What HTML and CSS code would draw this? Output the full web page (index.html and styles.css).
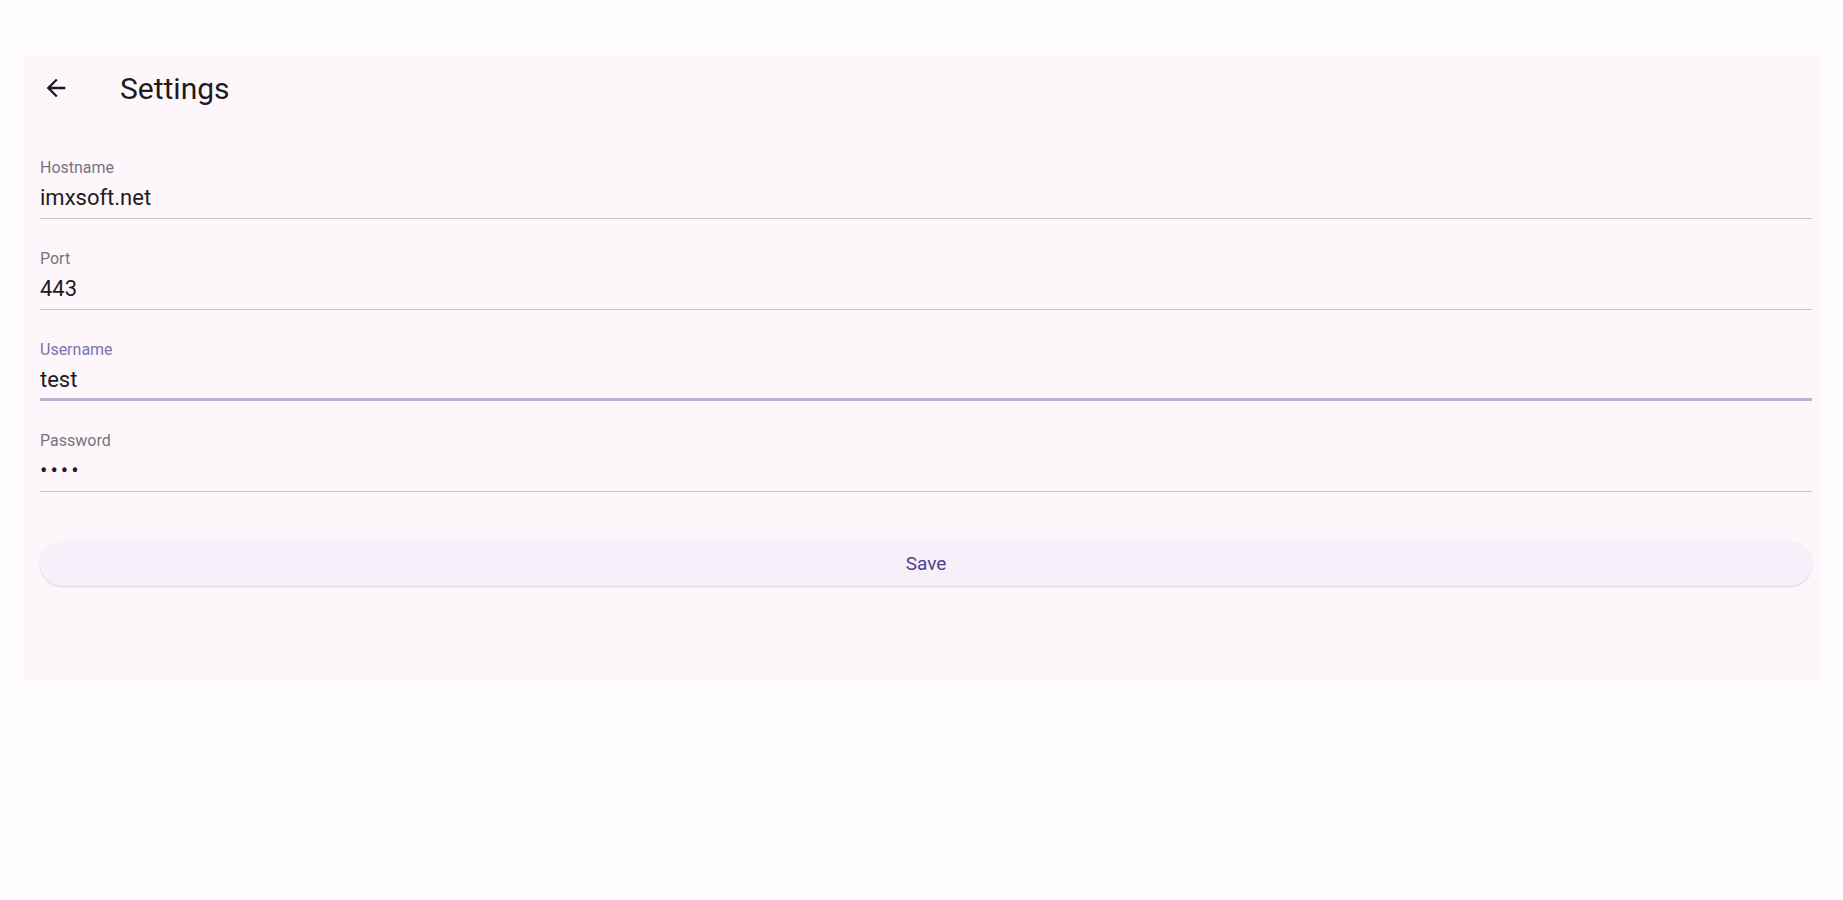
FILE: index.html
```html
<!DOCTYPE html>
<html lang="en">
<head>
    <meta charset="UTF-8">
    <meta name="viewport" content="width=device-width, initial-scale=1.0">
    <title>Settings</title>
    <link rel="stylesheet" href="styles.css">
</head>
<body>

    <div class="window">

        <!-- Barra superior -->
        <div class="app-bar">
            <span class="back">
                <svg width="28" height="28" viewBox="0 0 24 24">
                    <path d="M20 11H7.83l5.59-5.59L12 4l-8 8 8 8 1.41-1.41L7.83 13H20v-2z" fill="#1d1b20"/>
                </svg>
            </span>
            <span class="title">Settings</span>
        </div>

        <!-- Campos do formulário -->
        <div class="form">
            <div class="field">
                <div class="label">Hostname</div>
                <div class="value">imxsoft.net</div>
            </div>
            <div class="field">
                <div class="label">Port</div>
                <div class="value">443</div>
            </div>
            <div class="field focused">
                <div class="label">Username</div>
                <div class="value">test</div>
            </div>
            <div class="field">
                <div class="label">Password</div>
                <div class="value dots">••••</div>
            </div>

            <div class="save">Save</div>
        </div>
    </div>

</body>
</html>
```

FILE: styles.css
```css
body {
    margin: 0;
    background: #fffdfe;
    font-family: Roboto, "Noto Sans", Arial, sans-serif;
    color: #1d1b20;
}

.window {
    margin: 56px 23px 0 24px;
    height: 624px;
    background: #fdf7fc;
    box-shadow: 0 0 3px rgba(0, 0, 0, 0.03);
}

.app-bar {
    display: flex;
    align-items: center;
    height: 64px;
    padding-left: 18px;
}

.back {
    display: flex;
    width: 28px;
    height: 28px;
}

.title {
    margin-left: 50px;
    font-size: 30px;
}

.form {
    padding: 8px 8px 0 16px;
}

.field {
    padding: 30px 0 6px;
    border-bottom: 1px solid #c8c4cc;
}

.label {
    font-size: 16px;
    line-height: 20px;
    color: #77737c;
    margin-bottom: 6px;
}

.value {
    font-size: 22px;
    line-height: 28px;
}

.dots {
    letter-spacing: 3px;
}

.focused {
    padding-bottom: 4px;
    border-bottom: 3px solid #bab3cf;
}

.focused .label {
    color: #7d72b0;
}

.save {
    margin-top: 49px;
    height: 45px;
    border-radius: 23px;
    background: #f6f0fa;
    box-shadow: 0 1px 2px rgba(0, 0, 0, 0.14);
    display: flex;
    align-items: center;
    justify-content: center;
    font-size: 19px;
    color: #4f3f8c;
}
```
